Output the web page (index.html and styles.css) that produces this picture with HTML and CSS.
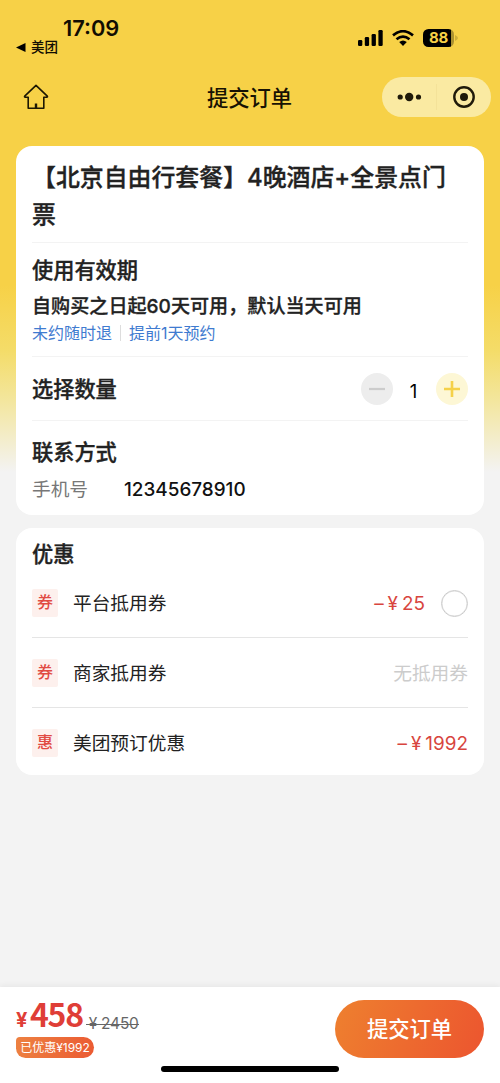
FILE: index.html
```html
<!DOCTYPE html>
<html lang="zh-CN">
<head>
<meta charset="utf-8">
<title>提交订单</title>
<link rel="stylesheet" href="styles.css">
</head>
<body>
<div class="app">
  <header class="status">
    <div class="status-left">
      <div class="clock">17:09</div>
      <div class="back-app"><svg width="10" height="9" viewBox="0 0 10 9"><path d="M0 4.5L9.5 0V9Z"/></svg><span>美团</span></div>
    </div>
    <div class="status-icons">
      <svg width="25" height="16" viewBox="0 0 25 16"><rect x="0" y="10" width="4.3" height="6" rx="1.2"/><rect x="6.8" y="7" width="4.3" height="9" rx="1.2"/><rect x="13.6" y="4" width="4.3" height="12" rx="1.2"/><rect x="20.4" y="0" width="4.3" height="16" rx="1.2"/></svg>
      <svg class="wifi" width="22" height="16" viewBox="0 0 22 16"><g fill="none" stroke="#000" stroke-width="2.7"><path d="M1 5.4Q11-3 21 5.4"/><path d="M4.5 9.3Q11 3.9 17.5 9.3"/></g><path d="M7.2 12Q11 8.9 14.8 12L11 16Z"/></svg>
      <div class="battery"><span class="battery-body">88</span><svg width="3" height="6" viewBox="0 0 3 6"><path d="M0 0Q3 1.5 3 3T0 6Z" fill="#cdae3a"/></svg></div>
    </div>
  </header>
  <nav class="nav">
    <svg class="home" width="26" height="26" viewBox="0 0 26 26" fill="none" stroke="#1d1703" stroke-width="1.6" stroke-linejoin="round"><path d="M13 1.3L24.3 12.2C24.7 12.8 24.4 13.2 23.8 13.2H20.8V24.3H5.2V13.2H2.2C1.6 13.2 1.3 12.8 1.7 12.2Z"/><path d="M13 19.5V24" stroke-width="2.4"/></svg>
    <h1>提交订单</h1>
    <div class="capsule">
      <svg width="26" height="12" viewBox="0 0 26 12"><circle cx="3.2" cy="6" r="2.6"/><circle cx="12.2" cy="6" r="4.2"/><circle cx="21.5" cy="6" r="2.6"/></svg>
      <i></i>
      <svg width="22" height="22" viewBox="0 0 22 22"><circle cx="11" cy="11" r="9.7" fill="none" stroke="#1f1a0a" stroke-width="2.4"/><circle cx="11" cy="11" r="4"/></svg>
    </div>
  </nav>
  <main>
    <section class="card order">
      <h2 class="product">【北京自由行套餐】4晚酒店+全景点门票</h2>
      <div class="validity">
        <h3>使用有效期</h3>
        <p class="period">自购买之日起60天可用，默认当天可用</p>
        <p class="rules"><span>未约随时退</span><span>提前1天预约</span></p>
      </div>
      <div class="quantity">
        <h3>选择数量</h3>
        <div class="stepper">
          <button class="minus"><svg width="16" height="16" viewBox="0 0 16 16"><path d="M0 8H16" stroke="#ccc" stroke-width="2.2"/></svg></button>
          <span>1</span>
          <button class="plus"><svg width="16" height="16" viewBox="0 0 16 16"><path d="M0 8H16M8 0V16" stroke="#f5d149" stroke-width="2.6"/></svg></button>
        </div>
      </div>
      <div class="contact">
        <h3>联系方式</h3>
        <div class="phone"><label>手机号</label><span>12345678910</span></div>
      </div>
    </section>
    <section class="card discounts">
      <h3>优惠</h3>
      <div class="row"><b>券</b><span class="name">平台抵用券</span><span class="minus-price"><i>–</i><i>¥</i>25</span><span class="radio"></span></div>
      <div class="row"><b>券</b><span class="name">商家抵用券</span><span class="none">无抵用券</span></div>
      <div class="row"><b>惠</b><span class="name">美团预订优惠</span><span class="minus-price"><i>–</i><i>¥</i>1992</span></div>
    </section>
  </main>
  <footer>
    <div class="total">
      <div class="prices"><span class="yen">¥</span><span class="amount">458</span><del><i>¥</i>2450</del></div>
      <div class="saved">已优惠¥1992</div>
    </div>
    <button class="submit">提交订单</button>
    <div class="home-indicator"></div>
  </footer>
</div>
</body>
</html>
```
FILE: styles.css
```css
* { box-sizing: border-box; margin: 0; padding: 0; }
body { font-family: Inter, "Noto Sans CJK SC", sans-serif; color: #222; }
i { font-style: normal; }
svg { display: block; flex: none; }
button { border: 0; font: inherit; }
.app { height: 1083px; display: flex; flex-direction: column; overflow: hidden; background: linear-gradient(#f7d147 0, #f7d147 285px, #f4dc68 350px, #f3e69d 400px, #f3eed2 445px, #f3f3f3 472px); }

.status { height: 60px; display: flex; justify-content: space-between; padding: 17px 43px 0 16px; }
.clock { padding-left: 47px; height: 22px; font-size: 21.8px; line-height: 22px; font-weight: 600; color: #120d02; }
.back-app { display: flex; align-items: center; gap: 5px; height: 16px; font-size: 13.5px; line-height: 16px; font-weight: 500; color: #120d02; }
.status-icons { display: flex; height: 42px; padding-bottom: 1px; align-items: center; gap: 9px; margin-right: -1px; }
.battery { display: flex; align-items: center; gap: 1px; }
.battery-body { width: 31px; height: 18px; border-radius: 5.5px; background: linear-gradient(90deg, #000 28px, #ac9231 28px); color: #f7d147; font-size: 15px; line-height: 18px; font-weight: 700; padding-left: 6px; letter-spacing: -.2px; }

.nav { height: 74px; margin-bottom: 12px; display: grid; grid-template-columns: 128px 1fr 128px; align-items: center; padding: 0 9px 0 0; }
.home { margin-left: 23px; }
.nav h1 { text-align: center; padding: 1px 0 0 8px; font-size: 21.3px; line-height: 30px; font-weight: 500; color: #171203; }
.capsule { justify-self: end; width: 109px; height: 40px; border-radius: 20px; background: #faeaa2; display: flex; align-items: center; padding: 0 15px; gap: 13px; }
.capsule svg { fill: #1f1a0a; }
.capsule i { width: 1px; height: 26px; background: #f4e299; margin-right: 3px; }

main { flex: 1; padding: 0 16px; }
.card { background: #fff; border-radius: 16px; padding: 0 16px; }
h3 { font-size: 21.2px; line-height: 30px; font-weight: 500; -webkit-text-stroke: .35px #222; }
.order { height: 369px; margin-bottom: 13px; }
.product { height: 97px; padding-top: 13px; border-bottom: 1px solid #f3f3f3; font-size: 23.9px; line-height: 37px; font-weight: 500; -webkit-text-stroke: .35px #222; }
.validity { height: 114px; padding-top: 12px; border-bottom: 1px solid #f3f3f3; }
.period { margin-top: 7px; font-size: 19.1px; line-height: 28px; font-weight: 500; -webkit-text-stroke: .3px #222; }
.rules { display: flex; align-items: center; font-size: 16px; line-height: 26px; color: #3f7bd0; }
.rules span + span { margin-left: 8px; padding-left: 8px; border-left: 1px solid #ddd; line-height: 16px; }
.quantity { height: 64px; display: flex; justify-content: space-between; align-items: center; border-bottom: 1px solid #f3f3f3; }
.stepper { display: flex; align-items: center; }
.stepper button { width: 32px; height: 32px; border-radius: 50%; display: grid; place-items: center; }
.minus { background: #ededed; }
.plus { background: #fdf7d5; }
.stepper > span { width: 43px; padding: 5px 2px 0 0; text-align: center; font-size: 18.5px; line-height: 24px; color: #000; }
.contact { padding-top: 16px; }
.phone { display: flex; margin-top: 9px; font-size: 18.7px; line-height: 28px; }
.phone label { width: 92px; color: #777; }
.phone span { color: #111; font-size: 18.9px; line-height: 27px; font-weight: 500; }

.discounts { height: 247px; padding-top: 11px; }
.row { height: 70px; display: flex; align-items: center; border-bottom: 1px solid #e5e5e5; font-size: 18.7px; line-height: 28px; }
.row:last-child { border: 0; }
.discounts h3 + .row { height: 69px; }
.row b { width: 26px; height: 28px; margin-right: 15px; border-radius: 2px; background: #fdf0ed; color: #e14b43; text-align: center; font-size: 16px; line-height: 27px; font-weight: 500; }
.name { flex: 1; padding-top: 2px; }
.minus-price { display: flex; align-items: baseline; gap: 4px; padding-top: 2px; color: #d8453e; font-size: 18.9px; }
.none { padding-top: 2px; color: #ccc; }
.radio { width: 27px; height: 27px; margin-left: 16px; border: 1.5px solid #ccc; box-shadow: inset 0 0 0 .5px #ddd; border-radius: 50%; }

footer { position: relative; height: 96px; background: #fff; padding: 10px 16px; display: flex; justify-content: space-between; align-items: flex-start; box-shadow: 0 -2px 5px #0000000c; }
.prices { display: flex; align-items: baseline; height: 40px; line-height: 32px; white-space: nowrap; }
.yen { color: #df3e37; font-size: 20px; font-weight: 700; width: 14px; }
.amount { color: #df3e37; font: 700 32px/32px "Noto Sans CJK SC", sans-serif; letter-spacing: -1.3px; }
del { display: inline-block; position: relative; top: 2px; margin-left: 3px; color: #666; font-size: 15.5px; letter-spacing: -.2px; line-height: 20px; background: linear-gradient(#666, #666) 0 10px / 100% 1px no-repeat; text-decoration: none; }
del i { margin: 0 4px 0 3px; }
.saved { width: 78px; height: 21px; border-radius: 4px 11px 11px 10px; background: linear-gradient(100deg, #ed8141, #eb5a32); color: #fff; font-size: 12px; line-height: 21px; text-align: center; white-space: nowrap; }
.submit { width: 149px; height: 58px; margin-top: 3px; padding-bottom: 3px; border-radius: 29px; background: linear-gradient(110deg, #ee802f, #ec552f); color: #fff; font-size: 21.3px; font-weight: 500; }
.home-indicator { position: absolute; left: 161px; bottom: 11px; width: 178px; height: 6px; border-radius: 3px; background: #000; }
```
